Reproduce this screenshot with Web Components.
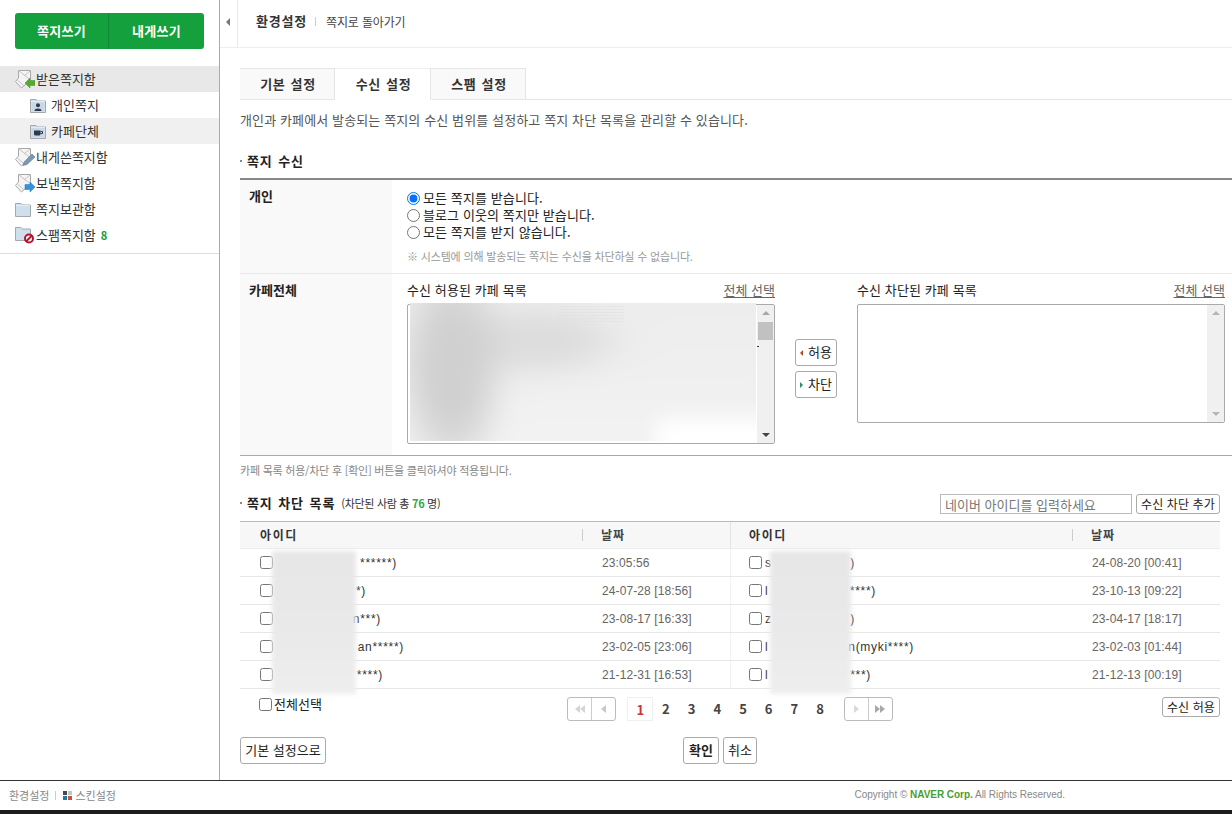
<!DOCTYPE html>
<html lang="ko">
<head>
<meta charset="utf-8">
<title>쪽지 환경설정</title>
<style>
  html, body { margin: 0; padding: 0; background: #fff; }
  body { font: 13px/1.3 "Noto Sans CJK KR", "Noto Sans", sans-serif; color: #333; overflow: hidden; }
</style>
</head>
<body>
<note-app></note-app>

<script>
const FONT = '"Noto Sans CJK KR", "Noto Sans", sans-serif';

// envelope base shared by the mail folders, the badge goes over it
const envelope = (badge) => `
  <svg width="20" height="19" viewBox="0 0 20 19">
    <path d="M3.5 .5H15.5V10L6.5 18 .5 11.5 3.5 8Z" fill="#f4f4f4" stroke="#a8a8a8"/>
    <path d="M3.5 .5L15.5 10M15.5 .5L9 6M2.5 10L9 16" fill="none" stroke="#c4c4c4"/>
    ${badge}
  </svg>`;

const folder = (inner) => `
  <svg width="20" height="15" viewBox="0 0 20 15">
    <path d="M.5 14.5V1.5H6L7.5 3H15.5V14.5Z" fill="#cfdfee" stroke="#a3a8ad"/>
    <path d="M1 3.5H15" stroke="#e8ebee"/>
    ${inner}
  </svg>`;

const triangle = (dir, color) => dir === "l"
  ? `<svg width="5" height="8" viewBox="0 0 5 8"><path d="M5 0V8L0 4Z" fill="${color}"/></svg>`
  : `<svg width="5" height="8" viewBox="0 0 5 8"><path d="M0 0V8L5 4Z" fill="${color}"/></svg>`;

const icons = {
  inbox: envelope('<path d="M15 8L10 13L15 18V15.5H20V10.5H15Z" fill="#55a92f" stroke="#3f8f22" stroke-width=".5"/>'),
  draft: envelope('<path d="M8 17.5L9 14L17 6L20 9L12 16.5Z" fill="#7f97b4" stroke="#5f7a99" stroke-width=".6"/>'),
  sent: envelope('<path d="M15 8L20 13L15 18V15.5H10V10.5H15Z" fill="#2f95d6" stroke="#1f7ab5" stroke-width=".5"/>'),
  box: folder(''),
  person: folder('<rect x="2" y="4.5" width="12" height="8.5" fill="#c9d7e6"/><circle cx="8" cy="7.3" r="2" fill="#2f3b48"/><path d="M4.5 13C4.5 9.8 11.5 9.8 11.5 13Z" fill="#2f3b48"/>'),
  cup: folder('<rect x="2" y="4.5" width="12" height="8.5" fill="#c9d7e6"/><path d="M4 6.5H10.5V10Q10.5 11.5 9 11.5H5.5Q4 11.5 4 10Z" fill="#2f3b48"/><path d="M10.5 7.5H12.5V9.5H10.5" fill="none" stroke="#2f3b48"/>'),
  spam: `<svg width="20" height="19" viewBox="0 0 20 19">
    <path d="M.5 14.5V1.5H6L7.5 3H15.5V14.5Z" fill="#cfdfee" stroke="#a3a8ad"/>
    <circle cx="14" cy="12.5" r="4" fill="#fff" stroke="#b5152b" stroke-width="2"/>
    <path d="M11 15.5L17 9.5" stroke="#b5152b" stroke-width="2"/>
  </svg>`
};

class NoteSidebar extends HTMLElement {
  constructor() {
    super();
    this.attachShadow({ mode: "open" });
    const items = [
      ["inbox", "받은쪽지함", "on"],
      ["person", "개인쪽지", "sub"],
      ["cup", "카페단체", "sub alt"],
      ["draft", "내게쓴쪽지함", ""],
      ["sent", "보낸쪽지함", ""],
      ["box", "쪽지보관함", ""],
      ["spam", "스팸쪽지함", "", "8"]
    ];
    this.shadowRoot.innerHTML = `
      <style>
        :host { display: block; width: 219px; border-right: 1px solid #aaa; box-sizing: content-box; }
        .write { margin: 13px 15px 17px; height: 36px; display: flex; background: #13a03d; border-radius: 3px; }
        .write span { flex: 1; text-align: center; line-height: 36px; color: #fff; font-weight: 700; font-size: 13px; letter-spacing: .3px; }
        .write span:first-child { flex: none; width: 93px; }
        .write span + span { border-left: 1px solid #0f8c34; }
        ul { list-style: none; margin: 0; padding: 0 0 5px; border-bottom: 1px solid #ddd; }
        li { height: 26px; display: flex; align-items: center; padding-left: 15px; gap: 1px; font-size: 13px; color: #333; }
        li svg { flex: none; }
        li.on { background: #e8e8e8; }
        li.sub { padding-left: 30px; gap: 1px; }
        li.alt { background: #f0f0f0; }
        b { margin-left: 4px; color: #1f9a3c; font-size: 11px; }
      </style>
      <div class="write"><span>쪽지쓰기</span><span>내게쓰기</span></div>
      <ul>
        ${items.map(([icon, label, cls, count]) => `
          <li class="${cls}">${icons[icon]}<span>${label}</span>${count ? `<b>${count}</b>` : ""}</li>`).join("")}
      </ul>`;
  }
}
customElements.define("note-sidebar", NoteSidebar);

class NoteTopbar extends HTMLElement {
  constructor() {
    super();
    this.attachShadow({ mode: "open" });
    this.shadowRoot.innerHTML = `
      <style>
        :host { display: flex; height: 47px; border-bottom: 1px solid #eee; }
        .fold { width: 17px; border-right: 1px solid #e8e8e8; display: flex; align-items: center; justify-content: center; padding-bottom: 3px; }
        .fold i { border: 4px solid transparent; border-right: 4px solid #777; border-left: 0; margin-right: 1px; }
        .crumb { padding: 0 0 4px 18px; display: flex; align-items: center; font-size: 12px; color: #444; letter-spacing: -.15px; }
        strong { font-size: 13px; font-weight: 700; color: #333; letter-spacing: .8px; }
        em { width: 1px; height: 9px; background: #ccc; margin: 0 10px 0 8px; }
      </style>
      <div class="fold"><i></i></div>
      <div class="crumb"><strong>환경설정</strong><em></em><span>쪽지로 돌아가기</span></div>`;
  }
}
customElements.define("note-topbar", NoteTopbar);

class NoteTabs extends HTMLElement {
  constructor() {
    super();
    this.attachShadow({ mode: "open" });
    this.shadowRoot.innerHTML = `
      <style>
        :host { display: flex; height: 31px; border-bottom: 1px solid #e4e4e4; }
        div { width: 95px; box-sizing: border-box; height: 32px; padding-left: 2px; text-align: center; line-height: 30px; font-size: 13px; font-weight: 700; color: #333; letter-spacing: .6px; word-spacing: 1px;
              background: #f9f9f9; border: 1px solid #e6e6e6; border-left: 0; }
        div:first-child { border-left: 1px solid #e6e6e6; }
        .on { background: #fff; border-bottom-color: #fff; border-top-color: #eee; width: 96px; }
      </style>
      <div>기본 설정</div><div class="on">수신 설정</div><div>스팸 설정</div>`;
  }
}
customElements.define("note-tabs", NoteTabs);

class NoteButton extends HTMLElement {
  constructor() {
    super();
    this.attachShadow({ mode: "open" });
    this.shadowRoot.innerHTML = `
      <style>
        :host { display: inline-flex; align-items: center; justify-content: center; box-sizing: border-box; background: #fff;
                border: 1px solid #aaa; border-radius: 3px; font-size: 13px; color: #222; white-space: nowrap; }
      </style>
      <slot></slot>`;
  }
}
customElements.define("note-button", NoteButton);

class CafeList extends HTMLElement {
  constructor() {
    super();
    this.attachShadow({ mode: "open" });
    const filled = this.hasAttribute("filled");
    this.shadowRoot.innerHTML = `
      <style>
        :host { display: block; width: 368px; }
        .head { display: flex; justify-content: space-between; height: 24px; font-size: 13px; color: #222; line-height: 20px; letter-spacing: .1px; }
        u { color: #666; font-size: 13px; letter-spacing: 0; text-underline-offset: 2px; }
        .box { position: relative; display: flex; box-sizing: border-box; height: ${filled ? 140 : 119}px; border: 1px solid #aaa; border-radius: 2px; background: #fff; }
        .view { flex: 1; }
        .bar { width: 17px; background: #f0f0f0; display: flex; flex-direction: column; align-items: center; justify-content: space-between; padding: 6px 0; box-sizing: border-box; position: relative; }
        .up { border: 4px solid transparent; border-bottom: 4px solid ${filled ? "#a8a8a8" : "#b5b5b5"}; border-top: 0; }
        .down { border: 4px solid transparent; border-top: 4px solid ${filled ? "#444" : "#b5b5b5"}; border-bottom: 0; }
        .thumb { position: absolute; top: 17px; left: 1px; right: 1px; height: 18px; background: #c1c1c1; }
        .blur { position: absolute; left: 2px; top: -2px; right: 18px; bottom: 2px; overflow: hidden; }
        .blur i { position: absolute; inset: -30px; filter: blur(13px);
          background:
            radial-gradient(ellipse 58px 120px at 72px 95px, #d0d0d0 45%, transparent 100%),
            radial-gradient(ellipse 110px 40px at 150px 68px, #dcdcdc 45%, transparent 100%),
            linear-gradient(180deg, #ececec 0, #efefef 50%, #f4f4f4 100%); }
        .blur::after { content: ""; position: absolute; right: -30px; bottom: -18px; width: 130px; height: 40px; background: #fff; filter: blur(10px); }
        .streak { position: absolute; left: 148px; top: 3px; width: 66px; height: 17px; background: repeating-linear-gradient(180deg, #dcdcdc 0 1px, transparent 1px 3px); opacity: .4; }
        .speck { position: absolute; left: 349px; top: 41px; width: 2px; height: 1px; background: #333; }
      </style>
      <div class="head"><span><slot></slot></span><u>전체 선택</u></div>
      <div class="box">
        <div class="view"></div>
        <div class="bar"><span class="up"></span>${filled ? '<span class="thumb"></span>' : ""}<span class="down"></span></div>
        ${filled ? '<div class="blur"><i></i><span class="streak"></span></div><span class="speck"></span>' : ""}
      </div>`;
  }
}
customElements.define("cafe-list", CafeList);

class ReceiveSection extends HTMLElement {
  constructor() {
    super();
    this.attachShadow({ mode: "open" });
    this.shadowRoot.innerHTML = `
      <style>
        :host { display: block; }
        .title { height: 38px; padding-top: 4px; box-sizing: border-box; font-size: 13px; font-weight: 700; color: #222; letter-spacing: .9px; word-spacing: 1px; display: flex; align-items: center; gap: 5px; }
        .title i { width: 2px; height: 2px; background: #888; }
        .row { display: flex; border-bottom: 1px solid #e8e8e8; }
        .row.first { border-top: 2px solid #888; height: 93px; box-sizing: content-box; }
        .row.second { height: 181px; border-bottom: 1px solid #aaa; }
        .th { width: 143px; padding: 8px 0 0 9px; background: #f9f9f9; font-weight: 700; font-size: 13px; color: #222; }
        .td { padding: 10px 0 0 15px; flex: 1; }
        label { display: flex; align-items: center; height: 17px; font-size: 13px; color: #222; letter-spacing: .1px; gap: 3px; }
        input { margin: 0; width: 13px; height: 13px; }
        .hint { margin-top: 7px; height: 16px; font-size: 11px; line-height: 16px; color: #999; letter-spacing: -.17px; }
        .lists { display: flex; padding-top: 6px; }
        .move { width: 82px; display: flex; flex-direction: column; align-items: center; gap: 5px; padding-top: 59px; box-sizing: border-box; }
        .move note-button { width: 42px; height: 27px; gap: 5px; }
        .tri-l { border: 3px solid transparent; border-right: 3px solid #b5482f; border-left: 0; }
        .tri-r { border: 3px solid transparent; border-left: 3px solid #2e8f5c; border-right: 0; }
        .note { height: 37px; box-sizing: border-box; padding-bottom: 9px; display: flex; align-items: center; font-size: 11px; color: #888; letter-spacing: -.22px; }
      </style>
      <div class="title"><i></i>쪽지 수신</div>
      <div class="row first">
        <div class="th">개인</div>
        <div class="td">
          <label><input type="radio" name="scope" checked>모든 쪽지를 받습니다.</label>
          <label><input type="radio" name="scope">블로그 이웃의 쪽지만 받습니다.</label>
          <label><input type="radio" name="scope">모든 쪽지를 받지 않습니다.</label>
          <div class="hint">※ 시스템에 의해 발송되는 쪽지는 수신을 차단하실 수 없습니다.</div>
        </div>
      </div>
      <div class="row second">
        <div class="th">카페전체</div>
        <div class="td lists" style="padding-top:6px">
          <cafe-list filled>수신 허용된 카페 목록</cafe-list>
          <div class="move">
            <note-button><span class="tri-l"></span>허용</note-button>
            <note-button><span class="tri-r"></span>차단</note-button>
          </div>
          <cafe-list>수신 차단된 카페 목록</cafe-list>
        </div>
      </div>
      <div class="note">카페 목록 허용/차단 후 [확인] 버튼을 클릭하셔야 적용됩니다.</div>`;
  }
}
customElements.define("receive-section", ReceiveSection);

class BlockSection extends HTMLElement {
  constructor() {
    super();
    this.attachShadow({ mode: "open" });
    // the id part under the blur patches is not readable, only what shows is written
    // [lead, tail, width up to the end of the tail, date]
    const left = [
      ["", "******)", 121, "23:05:56"],
      ["", "*)", 90, "24-07-28 [18:56]"],
      ["", "n***)", 105, "23-08-17 [16:33]"],
      ["", "an*****)", 128, "23-02-05 [23:06]"],
      ["", "****)", 107, "21-12-31 [16:53]"]
    ];
    const right = [
      ["s", ")", 90, "24-08-20 [00:41]"],
      ["l", "****)", 111, "23-10-13 [09:22]"],
      ["z", ")", 90, "23-04-17 [18:17]"],
      ["l", "n(myki****)", 149, "23-02-03 [01:44]"],
      ["l", "***)", 106, "21-12-13 [00:19]"]
    ];
    const cell = ([lead, tail, width, date], col) => `
      <div class="cell">
        <input type="checkbox"><span class="slot" style="width:${col}px"><span class="id" style="width:${width}px"><span>${lead}</span><span>${tail}</span></span></span><span class="date">${date}</span>
      </div>`;
    const body = left.map((l, i) => `<div class="row">${cell(l, 329)}${cell(right[i], 330)}</div>`).join("");
    this.shadowRoot.innerHTML = `
      <style>
        :host { display: block; position: relative; }
        .top { height: 28px; display: flex; align-items: flex-start; }
        .title { margin-top: 2px; font-size: 13px; font-weight: 700; color: #222; letter-spacing: .9px; word-spacing: 1px; display: flex; align-items: center; gap: 5px; }
        .title i { width: 2px; height: 2px; background: #888; }
        .sub { font-size: 11px; color: #333; margin-left: 1px; letter-spacing: -.3px; word-spacing: 0; font-weight: 400; }
        .sub b { color: #2fa84f; }
        .find { margin-left: auto; display: flex; gap: 4px; margin-top: 1px; }
        .find div { width: 192px; height: 20px; box-sizing: border-box; border: 1px solid #bbb; padding-left: 4px; font-size: 13px; line-height: 20px; color: #777; }
        .find note-button { width: 84px; height: 20px; font-size: 12px; letter-spacing: .1px; }
        .grid { border-top: 1px solid #bbb; }
        .row { display: grid; grid-template-columns: 490px 490px; height: 28px; box-sizing: border-box; border-bottom: 1px solid #e6e6e6; }
        .row.head { height: 27px; background: #f7f7f7; border-bottom: 1px solid #ececec; }
        .row > div { display: flex; align-items: center; box-sizing: border-box; padding-left: 20px; }
        .row > div + div { padding-left: 18px; border-left: 1px solid #f2f2f2; }
        .row.head > div + div { border-left: 1px solid #e4e4e4; }
        .hid { width: 322px; font-size: 12px; font-weight: 700; color: #333; letter-spacing: 1.6px; }
        .row > div + div .hid { width: 323px; }
        .hdate { font-size: 12px; font-weight: 700; color: #444; border-left: 1px solid #ccc; padding-left: 18px; line-height: 12px; letter-spacing: 1px; }
        input { margin: 0; width: 13px; height: 13px; flex: none; }
        .slot { display: block; box-sizing: border-box; padding-left: 3px; }
        .id { display: flex; justify-content: space-between; font: 12px "Liberation Sans", sans-serif; color: #333; letter-spacing: .7px; white-space: nowrap; }
        .date { font: 12px "Liberation Sans", sans-serif; letter-spacing: .1px; color: #666; white-space: nowrap; }
        .foot { display: flex; align-items: center; height: 40px; position: relative; }
        .all { display: flex; align-items: center; gap: 2px; padding: 0 0 9px 19px; font-size: 13px; color: #222; }
        .pager { position: absolute; left: 327px; top: 8px; display: flex; align-items: center; height: 24px; }
        .arrows { display: flex; width: 49px; height: 24px; box-sizing: border-box; border: 1px solid #bbb; border-radius: 3px; }
        .arrows span { flex: 1; display: flex; align-items: center; justify-content: center; }
        .arrows span + span { border-left: 1px solid #ccc; }
        .nums { display: flex; margin: 0 11px 0 11.4px; }
        .nums span { width: 25.7px; height: 24px; line-height: 24px; text-align: center; font-weight: 700; font-size: 13px; color: #444; box-sizing: border-box; }
        .nums .on { color: #c33; border: 1px solid #f0f0f0; }
        .allow { margin: 0 0 0 auto; width: 58px; height: 20px; position: relative; top: -2px; font-size: 12px; letter-spacing: .1px; }
        .patch { position: absolute; top: 58px; height: 143px; filter: blur(2px); background: linear-gradient(180deg, #e7e7e7, #e9e9e9 50%, #eeeeee); }
      </style>
      <div class="top">
        <div class="title"><i></i>쪽지 차단 목록<span class="sub">(차단된 사람 총 <b>76</b> 명)</span></div>
        <div class="find"><div>네이버 아이디를 입력하세요</div><note-button>수신 차단 추가</note-button></div>
      </div>
      <div class="grid">
        <div class="row head">
          <div><span class="hid">아이디</span><span class="hdate">날짜</span></div>
          <div><span class="hid">아이디</span><span class="hdate">날짜</span></div>
        </div>
        ${body}
      </div>
      <div class="foot">
        <label class="all"><input type="checkbox">전체선택</label>
        <div class="pager">
          <div class="arrows"><span>${triangle("l", "#d4d4d4")}${triangle("l", "#d4d4d4")}</span><span>${triangle("l", "#c8c8c8")}</span></div>
          <div class="nums"><span class="on">1</span><span>2</span><span>3</span><span>4</span><span>5</span><span>6</span><span>7</span><span>8</span></div>
          <div class="arrows"><span>${triangle("r", "#d8d8d8")}</span><span>${triangle("r", "#a8a8a8")}${triangle("r", "#a8a8a8")}</span></div>
        </div>
        <note-button class="allow">수신 허용</note-button>
      </div>
      <div class="patch" style="left:32px;width:84px"></div>
      <div class="patch" style="left:530px;width:81px"></div>`;
  }
}
customElements.define("block-section", BlockSection);

class NoteFooter extends HTMLElement {
  constructor() {
    super();
    this.attachShadow({ mode: "open" });
    this.shadowRoot.innerHTML = `
      <style>
        :host { display: flex; height: 34px; box-sizing: border-box; border-top: 1px solid #333; border-bottom: 4px solid #1c1c1c; align-items: center; padding: 0 0 0 9px; font-size: 11px; color: #888; background: #fff; }
        em { width: 1px; height: 9px; background: #ccc; margin: 0 7px 0 6px; }
        .skin { display: grid; grid-template-columns: 4px 4px; gap: 1px; margin-right: 3px; }
        .skin i { width: 4px; height: 4px; }
        .copy { margin: 0 167px 2px auto; font: 10px "Liberation Sans", sans-serif; color: #888; letter-spacing: -.03px; }
        .copy b { color: #4a9e2e; }
      </style>
      <span>환경설정</span><em></em>
      <span class="skin"><i style="background:#444a55"></i><i style="background:#c4c4c4"></i><i style="background:#1f7d9a"></i><i style="background:#c9503c"></i></span>
      <span>스킨설정</span>
      <span class="copy">Copyright © <b>NAVER Corp.</b> All Rights Reserved.</span>`;
  }
}
customElements.define("note-footer", NoteFooter);

class NoteApp extends HTMLElement {
  constructor() {
    super();
    this.attachShadow({ mode: "open" });
    this.shadowRoot.innerHTML = `
      <style>
        :host { display: block; width: 1232px; height: 814px; font-family: ${FONT}; }
        .wrap { display: flex; height: 780px; }
        main { flex: 1; min-width: 0; }
        .page { padding: 20px 0 0 20px; }
        .desc { height: 40px; padding-top: 12px; box-sizing: border-box; font-size: 13px; color: #555; letter-spacing: .12px; }
        .block { margin-right: 12px; }
        .actions { display: flex; height: 27px; margin: 8px 12px 0 0; position: relative; }
        .actions note-button { height: 27px; }
        .reset { width: 86px; }
        .center { position: absolute; left: 443px; display: flex; gap: 4px; }
        .ok { width: 36px; font-weight: 700; }
        .no { width: 34px; }
      </style>
      <div class="wrap">
        <note-sidebar></note-sidebar>
        <main>
          <note-topbar></note-topbar>
          <div class="page">
            <note-tabs></note-tabs>
            <div class="desc">개인과 카페에서 발송되는 쪽지의 수신 범위를 설정하고 쪽지 차단 목록을 관리할 수 있습니다.</div>
            <receive-section></receive-section>
            <block-section class="block"></block-section>
            <div class="actions">
              <note-button class="reset">기본 설정으로</note-button>
              <div class="center"><note-button class="ok">확인</note-button><note-button class="no">취소</note-button></div>
            </div>
          </div>
        </main>
      </div>
      <note-footer></note-footer>`;
  }
}
customElements.define("note-app", NoteApp);
</script>
</body>
</html>
